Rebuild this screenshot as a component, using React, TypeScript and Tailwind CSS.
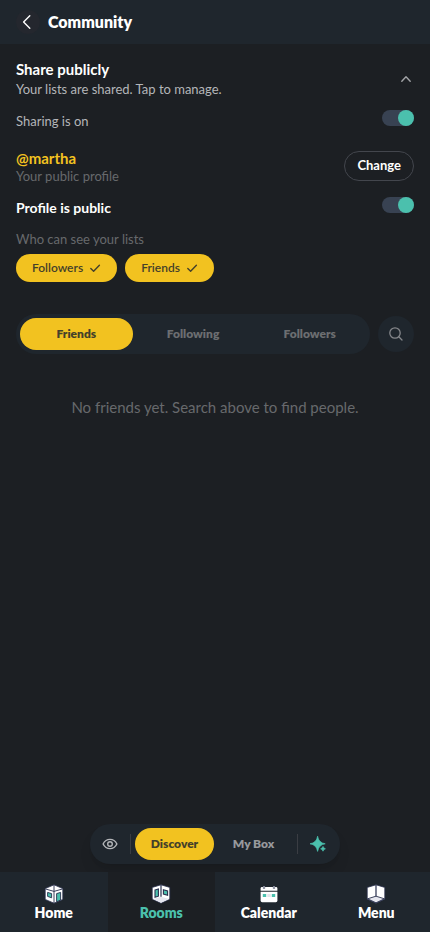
import { useState } from "react";
import type { ReactNode } from "react";

const TABS = ["Friends", "Following", "Followers"];

function Toggle({ id, label, strong }: { id: string; label: string; strong?: boolean }) {
  const [on, setOn] = useState(true);

  return (
    <div className="flex items-start justify-between">
      <label
        htmlFor={id}
        className={`leading-[22px] ${strong ? "text-sm font-bold text-white" : "text-[13px] text-[#b4b6b9]"}`}
      >
        {label}
      </label>
      <input
        id={id}
        type="checkbox"
        role="switch"
        checked={on}
        onChange={() => setOn(!on)}
        className="block h-4 w-8 appearance-none rounded-full bg-[#384252] before:block before:size-4 before:rounded-full before:bg-[#8b929c] checked:before:ml-4 checked:before:bg-[#4bc0ad]"
      />
    </div>
  );
}

function Chip({ label }: { label: string }) {
  const [active, setActive] = useState(true);

  return (
    <button
      aria-pressed={active}
      onClick={() => setActive(!active)}
      className={`flex h-7 items-center gap-1.5 rounded-full px-4 text-xs font-semibold ${
        active ? "bg-[#f2c220] text-[#44402a]" : "bg-[#1f262d] text-[#6c6e71]"
      }`}
    >
      {label}
      {active && (
        <svg viewBox="0 0 12 12" className="size-3" fill="none" stroke="currentColor" strokeWidth="1.4" strokeLinecap="round" strokeLinejoin="round">
          <path d="M1.8 6.6 4.6 9.3 10.4 3.2" />
        </svg>
      )}
    </button>
  );
}

function HomeIcon() {
  return (
    <svg viewBox="0 0 20 20" className="size-5">
      <path d="M10 .8 18.8 4.6V15.4L10 19.2 1.2 15.4V4.6Z" fill="#fff" stroke="#29304d" strokeWidth=".8" />
      <path d="M1.6 5 10 7.4 18.4 5M10 1V19" fill="none" stroke="#29304d" strokeWidth=".9" />
      <path d="M3.6 8.4 7.6 9.6V13.8L3.6 12.4Z" fill="#4bc0ad" stroke="#29304d" strokeWidth=".9" />
      <path d="M12.6 9.6 16.6 8.4V16L12.6 17.8Z" fill="#4bc0ad" stroke="#29304d" strokeWidth=".9" />
    </svg>
  );
}

function RoomsIcon() {
  return (
    <svg viewBox="0 0 20 20" className="size-5">
      <path d="M1.2 3.4 10 .8 18.8 3.4V15L10 19.2 1.2 15Z" fill="#fff" stroke="#29304d" strokeWidth=".8" />
      <path d="M1.6 15 10 12.8 18.4 15 10 18.8Z" fill="#e6e7ef" />
      <path d="M10 1V12.8" stroke="#29304d" strokeWidth="1.2" />
      <path d="M4 6 7.4 5V12.2L4 13.2Z" fill="#4bc0ad" stroke="#29304d" strokeWidth="1.1" />
      <path d="M12.4 5.8 16.6 7V11.2L12.4 10Z" fill="#4bc0ad" stroke="#29304d" strokeWidth="1.1" />
    </svg>
  );
}

function CalendarIcon() {
  return (
    <svg viewBox="0 0 20 20" className="size-5">
      <path d="M3 3H17Q18.4 3 18.4 4.4V6.8H1.6V4.4Q1.6 3 3 3Z" fill="#fff" />
      <path d="M1.6 7.8H18.4V16.6Q18.4 18.2 16.8 18.2H3.2Q1.6 18.2 1.6 16.6Z" fill="#fff" />
      <path d="M5 2V4.4M15 2V4.4" stroke="#29304d" strokeWidth="2.2" />
      <path d="M5 2.2V4M15 2.2V4" stroke="#fff" strokeWidth="1" />
      <path d="M3.8 10H7.2V13H3.8ZM12.8 10H16.2V13H12.8Z" fill="#4bc0ad" />
      <path d="M8.3 10H11.7V13H8.3Z" fill="#e3e5ea" />
    </svg>
  );
}

function MenuIcon() {
  return (
    <svg viewBox="0 0 20 20" className="size-5">
      <path d="M1.2 3.4 10 .8 18.8 3.4V15L10 19.2 1.2 15Z" fill="#fff" stroke="#29304d" strokeWidth=".8" />
      <path d="M1.6 14.8 10 12.2 18.4 14.8 10 18.8Z" fill="#e6e7ef" stroke="#29304d" strokeWidth=".9" />
      <path d="M10 1V12.2" stroke="#29304d" strokeWidth="1.2" />
    </svg>
  );
}

function NavItem({ label, icon, active }: { label: string; icon: ReactNode; active?: boolean }) {
  return (
    <a
      href="#"
      aria-current={active ? "page" : undefined}
      className={`flex h-15 flex-1 flex-col items-center pt-3 text-sm leading-[18px] font-extrabold ${
        active ? "bg-[#1c1f23] text-[#4bc0ad]" : "text-white"
      }`}
    >
      {icon}
      {label}
    </a>
  );
}

export default function App() {
  const [tab, setTab] = useState("Friends");
  const [open, setOpen] = useState(true);

  return (
    <div className="flex min-h-screen flex-col bg-[#1c1f23] font-['Lato',sans-serif] text-white">
      <header className="flex h-11 items-center gap-2 bg-[#1f262d] px-4">
        <button aria-label="Back" className="flex size-6 items-center justify-center rounded-full bg-[#24272e]">
          <svg viewBox="0 0 16 16" className="size-4" fill="none" stroke="currentColor" strokeWidth="1.4" strokeLinecap="round" strokeLinejoin="round">
            <path d="M9.8 1.8 3.6 8 9.8 14.2" />
          </svg>
        </button>
        <h1 className="text-base leading-6 font-extrabold">Community</h1>
      </header>

      <main className="flex-1 px-4 pt-[15px]">
        <button aria-expanded={open} onClick={() => setOpen(!open)} className="flex w-full items-center justify-between text-left">
          <span>
            <span className="block text-[15px] leading-5 font-bold">Share publicly</span>
            <span className="block text-[13px] leading-5 text-[#b4b6b9]">Your lists are shared. Tap to manage.</span>
          </span>
          <svg viewBox="0 0 16 16" className={`size-4 text-[#a2a4a7] ${open ? "" : "rotate-180"}`} fill="none" stroke="currentColor" strokeWidth="1.4" strokeLinecap="round" strokeLinejoin="round">
            <path d="M3.8 10.2 8 5.8 12.2 10.2" />
          </svg>
        </button>

        {open && (
          <section>
            <div className="mt-[11px]">
              <Toggle id="sharing" label="Sharing is on" />
            </div>

            <div className="mt-4 flex items-center justify-between">
              <div>
                <p className="text-[15px] leading-5 font-bold text-[#f2c220]">@martha</p>
                <p className="text-[13px] leading-4 text-[#67696c]">Your public profile</p>
              </div>
              <button className="h-[30px] rounded-full border border-[#43464d] px-3 text-[13px] font-bold">Change</button>
            </div>

            <div className="mt-[13px]">
              <Toggle id="profile" label="Profile is public" strong />
            </div>

            <p className="mt-3 text-[13px] leading-4 text-[#67696c]">Who can see your lists</p>
            <div className="mt-[7px] flex gap-2">
              <Chip label="Followers" />
              <Chip label="Friends" />
            </div>
          </section>
        )}

        <div className="mt-8 flex items-center gap-2">
          <div role="tablist" className="flex h-10 flex-1 gap-1 rounded-full bg-[#1f262d] p-1">
            {TABS.map((name) => (
              <button
                key={name}
                role="tab"
                aria-selected={tab === name}
                onClick={() => setTab(name)}
                className={`flex-1 rounded-full text-xs font-extrabold ${
                  tab === name ? "bg-[#f2c220] text-[#44402a]" : "text-[#6c6e71]"
                }`}
              >
                {name}
              </button>
            ))}
          </div>
          <button aria-label="Search" className="flex size-9 items-center justify-center rounded-full bg-[#1f262d] text-[#85878b]">
            <svg viewBox="0 0 16 16" className="size-4" fill="none" stroke="currentColor" strokeWidth="1.3" strokeLinecap="round">
              <circle cx="7" cy="7" r="5.2" />
              <path d="M10.8 10.8 14 14" />
            </svg>
          </button>
        </div>

        <p className="mt-[43px] text-center text-[15px] leading-5 text-[#67696c]">
          No friends yet. Search above to find people.
        </p>
      </main>

      <div className="mx-auto mb-2 flex h-10 items-center rounded-full bg-[#1f262d] pr-0.5 pl-1 shadow-lg">
        <button aria-label="Preview" className="flex h-8 w-8 items-center justify-center text-[#b4b6b9]">
          <svg viewBox="0 0 16 16" className="size-4" fill="none" stroke="currentColor" strokeWidth="1.4" strokeLinejoin="round">
            <path d="M1.1 8C2.6 5 5 3.4 8 3.4S13.4 5 14.9 8C13.4 11 11 12.6 8 12.6S2.6 11 1.1 8Z" />
            <circle cx="8" cy="8" r="2.3" />
          </svg>
        </button>
        <span className="mx-1 h-5 w-px bg-[#3a3d43]" />
        <button className="h-8 w-[79px] rounded-full bg-[#f2c220] text-xs font-extrabold text-[#44402a]">Discover</button>
        <button className="h-8 w-[79px] text-xs font-extrabold text-[#97999c]">My Box</button>
        <span className="ml-1 h-5 w-px bg-[#3a3d43]" />
        <button aria-label="Suggestions" className="flex h-8 w-10 items-center justify-center text-[#4bc0ad]">
          <svg viewBox="0 0 18 18" className="size-[18px]" fill="currentColor">
            <path d="M8.6 1.2Q9.6 7.8 16.2 8.8 9.6 9.8 8.6 16.4 7.6 9.8 1 8.8 7.6 7.8 8.6 1.2Z" stroke="currentColor" strokeWidth=".7" strokeLinejoin="round" />
            <path d="M14 11.4Q14.5 13.3 16.4 13.8 14.5 14.3 14 16.2 13.5 14.3 11.6 13.8 13.5 13.3 14 11.4Z" stroke="currentColor" strokeWidth=".7" strokeLinejoin="round" />
          </svg>
        </button>
      </div>

      <nav className="flex bg-[#1f262d]">
        <NavItem label="Home" icon={<HomeIcon />} />
        <NavItem label="Rooms" icon={<RoomsIcon />} active />
        <NavItem label="Calendar" icon={<CalendarIcon />} />
        <NavItem label="Menu" icon={<MenuIcon />} />
      </nav>
    </div>
  );
}
